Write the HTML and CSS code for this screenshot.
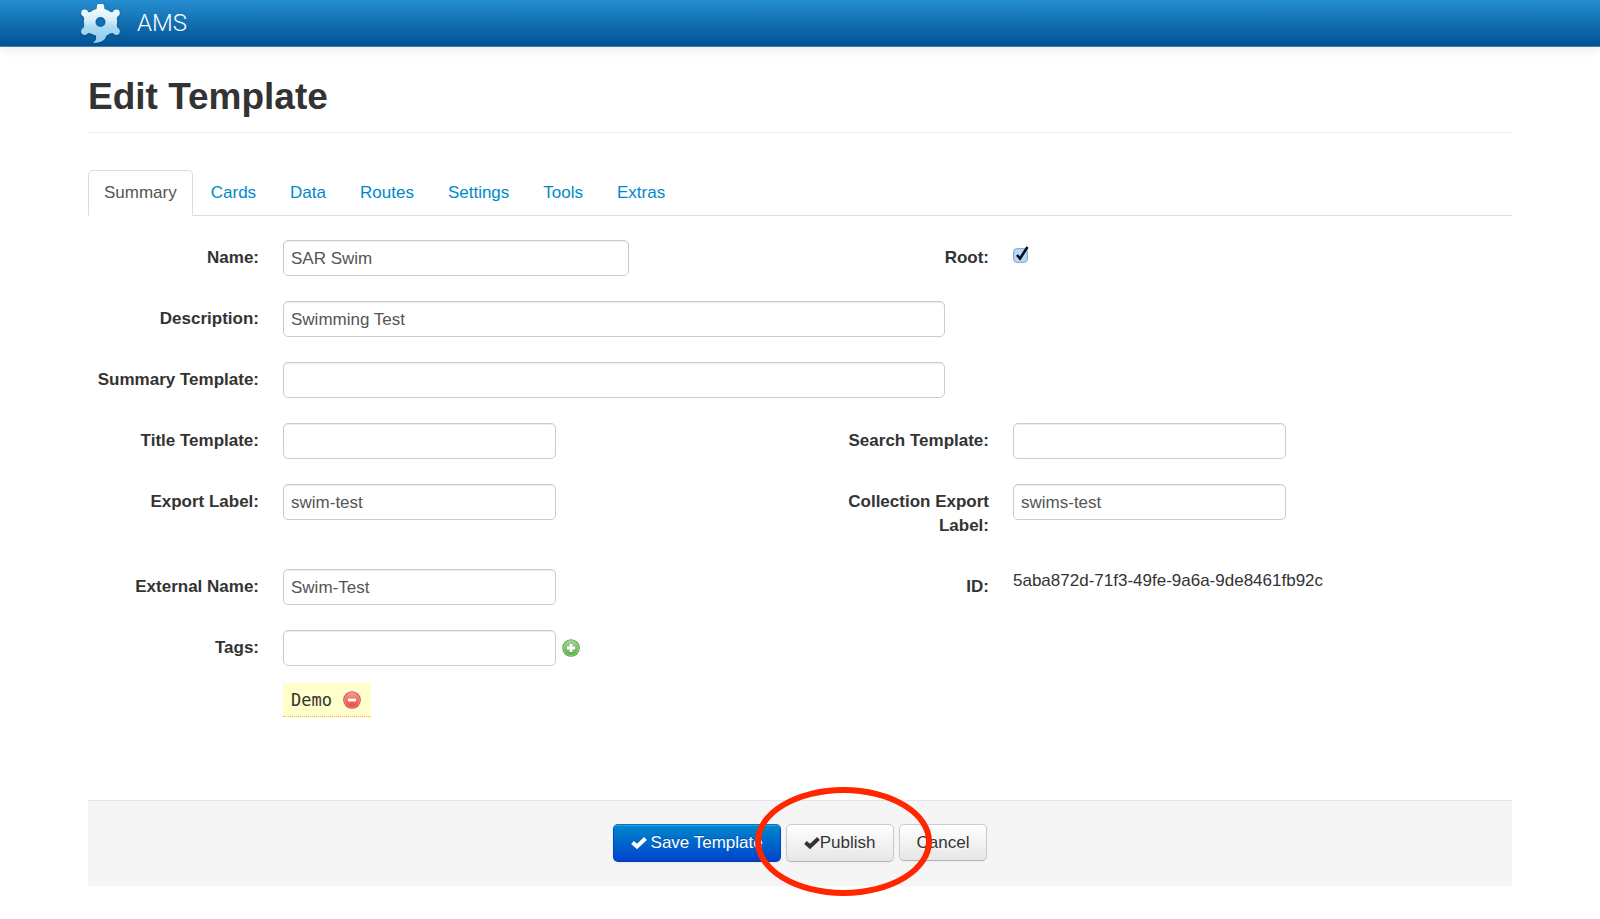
FILE: index.html
```html
<!DOCTYPE html>
<html lang="en">
<head>
<meta charset="utf-8">
<title>AMS - Edit Template</title>
<link rel="stylesheet" href="styles.css">
</head>
<body>
<header class="navbar">
  <svg class="logo" viewBox="0 0 41 42" aria-hidden="true">
    <defs>
      <linearGradient id="gear" gradientUnits="userSpaceOnUse" x1="0" y1="2" x2="0" y2="41">
        <stop offset="0" stop-color="#fff"/>
        <stop offset=".4" stop-color="#d8f0f8"/>
        <stop offset=".6" stop-color="#a8daf3"/>
        <stop offset="1" stop-color="#90cbee"/>
      </linearGradient>
    </defs>
    <g fill="url(#gear)">
      <path fill-rule="evenodd" d="M17 3.500 Q17.200 2 18.500 2 H22.500 Q23.800 2 24 3.500 L24.500 7 Q28 8 30.500 10 Q32 10.800 34 9.500 L38.500 13.500 Q36.600 15 36.800 17 Q37.500 20 36.800 23 Q36.500 25.500 38.500 27 L34.500 31.500 Q32 30.500 30 31.500 Q28 33 26.500 33.500 Q25 38.500 20 40 Q16 41.300 12.800 41 Q17 38.500 16 33.500 Q13.500 33 11 31.500 Q9 30.500 6.500 31.500 L2.500 27 Q4.500 25.500 4.200 23 Q3.500 20 4.200 17 Q4.400 15 2.500 13.500 L7 9.500 Q9 10.800 10.500 10 Q13 8 16.500 7 Z M20.500 15 A5 5 0 1 0 20.500 25 A5 5 0 1 0 20.500 15 Z"/>
      <circle cx="4.600" cy="11" r="3.400"/>
      <circle cx="36.400" cy="11" r="3.400"/>
      <circle cx="4.600" cy="29.500" r="3.400"/>
      <circle cx="36.400" cy="29.500" r="3.400"/>
    </g>
  </svg>
  <a class="brand" href="#">AMS</a>
</header>

<main class="page">
  <h1 class="title">Edit Template</h1>

  <nav class="tabs">
    <a class="tab tab-active" href="#summary" aria-current="page">Summary</a>
    <a class="tab" href="#cards">Cards</a>
    <a class="tab" href="#data">Data</a>
    <a class="tab" href="#routes">Routes</a>
    <a class="tab" href="#settings">Settings</a>
    <a class="tab" href="#tools">Tools</a>
    <a class="tab" href="#extras">Extras</a>
  </nav>

  <form>
    <div class="fields">
      <div class="field">
        <label class="label" for="name">Name:</label>
        <input class="text text-medium" id="name" type="text" value="SAR Swim">
      </div>
      <div class="field">
        <label class="label" for="root">Root:</label>
        <input class="check" id="root" type="checkbox" checked>
      </div>
      <div class="field field-full">
        <label class="label" for="description">Description:</label>
        <input class="text text-wide" id="description" type="text" value="Swimming Test">
      </div>
      <div class="field field-full">
        <label class="label" for="summary-template">Summary Template:</label>
        <input class="text text-wide" id="summary-template" type="text">
      </div>
      <div class="field">
        <label class="label" for="title-template">Title Template:</label>
        <input class="text" id="title-template" type="text">
      </div>
      <div class="field">
        <label class="label" for="search-template">Search Template:</label>
        <input class="text" id="search-template" type="text">
      </div>
      <div class="field">
        <label class="label" for="export-label">Export Label:</label>
        <input class="text" id="export-label" type="text" value="swim-test">
      </div>
      <div class="field">
        <label class="label" for="collection-label">Collection Export Label:</label>
        <input class="text" id="collection-label" type="text" value="swims-test">
      </div>
      <div class="field">
        <label class="label" for="external-name">External Name:</label>
        <input class="text" id="external-name" type="text" value="Swim-Test">
      </div>
      <div class="field">
        <label class="label" for="template-id">ID:</label>
        <output class="value" id="template-id">5aba872d-71f3-49fe-9a6a-9de8461fb92c</output>
      </div>
      <div class="field field-full">
        <label class="label" for="tags">Tags:</label>
        <div class="tag-editor">
          <div class="tag-entry">
            <input class="text" id="tags" type="text">
            <button class="icon-button" type="button" aria-label="Add tag">
              <svg class="round-icon" viewBox="0 0 18 18">
                <defs><linearGradient id="green" x1="0" y1="0" x2="0" y2="1"><stop offset="0" stop-color="#a5d49c"/><stop offset="1" stop-color="#55b03f"/></linearGradient></defs>
                <circle cx="9" cy="9" r="8.800" fill="#559c4c"/>
                <circle cx="9" cy="9" r="7.500" fill="url(#green)" stroke="#a6d59c" stroke-width=".8"/>
                <path d="M9 5V13M5 9H13" stroke="#fff" stroke-width="2.800"/>
              </svg>
            </button>
          </div>
          <div class="tag">
            <span>Demo</span>
            <button class="icon-button" type="button" aria-label="Remove tag Demo">
              <svg class="round-icon" viewBox="0 0 18 18">
                <defs><linearGradient id="red" x1="0" y1="0" x2="0" y2="1"><stop offset="0" stop-color="#f39a8c"/><stop offset="1" stop-color="#e9493b"/></linearGradient></defs>
                <circle cx="9" cy="9" r="8.800" fill="#cf4d48"/>
                <circle cx="9" cy="9" r="7.500" fill="url(#red)" stroke="#f29b92" stroke-width=".8"/>
                <path d="M5 9H13" stroke="#fff" stroke-width="2.800"/>
              </svg>
            </button>
          </div>
        </div>
      </div>
    </div>

    <div class="actions">
      <button class="button button-primary" type="submit"><svg class="tick" viewBox="0 0 16 12" aria-hidden="true"><path d="M1.500 5.500 6 9.500 14.500 1.500" fill="none" stroke="currentColor" stroke-width="4"/></svg>Save Template</button>
      <div class="highlighted">
        <button class="button" type="button"><svg class="tick" viewBox="0 0 16 12" aria-hidden="true"><path d="M1.500 5.500 6 9.500 14.500 1.500" fill="none" stroke="currentColor" stroke-width="4"/></svg>Publish</button>
        <div class="ring"></div>
      </div>
      <button class="button button-plain" type="button">Cancel</button>
    </div>
  </form>
</main>
</body>
</html>
```
FILE: styles.css
```css
* { box-sizing: border-box; }

body {
  margin: 0;
  background: #fff;
  color: #333;
  font: 17px/24px "Liberation Sans", Arial, sans-serif;
}

.navbar {
  display: flex;
  align-items: center;
  gap: 16px;
  height: 47px;
  padding: 0 80px 1px;
  background: linear-gradient(#258dd0, #005294);
  border-bottom: 1px solid #3f80b5;
  box-shadow: 0 1px 12px rgba(0, 0, 0, .1);
}

.logo {
  width: 41px;
  height: 42px;
  filter: drop-shadow(0 1px 1px rgba(0, 40, 80, .4));
}

.brand {
  color: #fff;
  font-family: Roboto, "Liberation Sans", sans-serif;
  font-size: 24px;
  font-weight: 300;
  text-decoration: none;
}

.page { padding: 25px 88px 32px; }

.title {
  margin: 0 0 37px;
  padding-bottom: 10px;
  border-bottom: 1px solid #eee;
  font-size: 37px;
  line-height: 50px;
}

.tabs {
  display: flex;
  gap: 2px;
  margin-bottom: 24px;
  border-bottom: 1px solid #ddd;
}

.tab {
  margin-bottom: -1px;
  padding: 10px 15px;
  border: 1px solid transparent;
  border-radius: 5px 5px 0 0;
  color: #08c;
  text-decoration: none;
}

.tab-active {
  background: #fff;
  border-color: #ddd;
  border-bottom-color: #fff;
  color: #555;
}

.fields {
  display: grid;
  grid-template-columns: 730fr 694fr;
  row-gap: 25px;
  padding-bottom: 83px;
}

.field {
  display: flex;
  align-items: flex-start;
  gap: 24px;
}

.field-full { grid-column: 1 / -1; }

.label {
  flex: none;
  width: 171px;
  padding: 6px 0;
  font-weight: bold;
  text-align: right;
}

.text {
  width: 273px;
  height: 36px;
  margin: 0;
  padding: 1px 7px 0;
  border: 1px solid #ccc;
  border-radius: 5px;
  background: #fff;
  box-shadow: inset 0 1px 1px rgba(0, 0, 0, .075);
  color: #555;
  font: inherit;
}

.text-medium { width: 346px; }
.text-wide { width: 662px; }

.check {
  appearance: none;
  width: 16px;
  height: 18px;
  margin: 6px 0 0;
  background: url("data:image/svg+xml,%3Csvg xmlns='http://www.w3.org/2000/svg' viewBox='0 0 16 18'%3E%3Crect x='.7' y='2.700' width='13.600' height='13.600' rx='3' fill='%23b4dafa' stroke='%238a9bb0'/%3E%3Cpath d='M4 9 7 12.500 14.500 1' fill='none' stroke='%23061024' stroke-width='2.600'/%3E%3C/svg%3E") no-repeat;
}

.tag-editor {
  display: flex;
  flex-direction: column;
  align-items: flex-start;
  gap: 17px;
}

.tag-entry {
  display: flex;
  align-items: center;
  gap: 6px;
}

.tag {
  display: flex;
  align-items: center;
  gap: 11px;
  height: 34px;
  padding: 0 10px 0 8px;
  background: #ffc;
  border-bottom: 1px dotted #fa3;
  font-family: "DejaVu Sans Mono", monospace;
}

.icon-button {
  display: flex;
  padding: 0;
  border: 0;
  background: none;
}

.round-icon { width: 18px; height: 18px; }

.actions {
  display: flex;
  justify-content: center;
  align-items: flex-start;
  gap: 5px;
  padding: 23px 24px 24px;
  background: #f5f5f5;
  border-top: 1px solid #e5e5e5;
}

.button {
  display: flex;
  align-items: center;
  height: 38px;
  padding: 0 17px;
  border: 1px solid #ccc;
  border-bottom-color: #b3b3b3;
  border-radius: 5px;
  background: linear-gradient(#fff, #e6e6e6);
  box-shadow: inset 0 1px 0 rgba(255, 255, 255, .2), 0 1px 2px rgba(0, 0, 0, .05);
  color: #333;
  font: inherit;
  text-shadow: 0 1px 1px rgba(255, 255, 255, .75);
}

.button-primary {
  gap: 4px;
  border-color: #0074cc #04c #003ab0;
  background: linear-gradient(#08c, #04c);
  color: #fff;
  text-shadow: 0 -1px 0 rgba(0, 0, 0, .25);
}

.button-plain { height: 37px; }

.tick { width: 16px; height: 12px; }

.highlighted { position: relative; }

.ring {
  position: absolute;
  inset: -37px -38px -34px -31px;
  border: 6px solid #ff2600;
  border-radius: 50%;
  pointer-events: none;
}
```
